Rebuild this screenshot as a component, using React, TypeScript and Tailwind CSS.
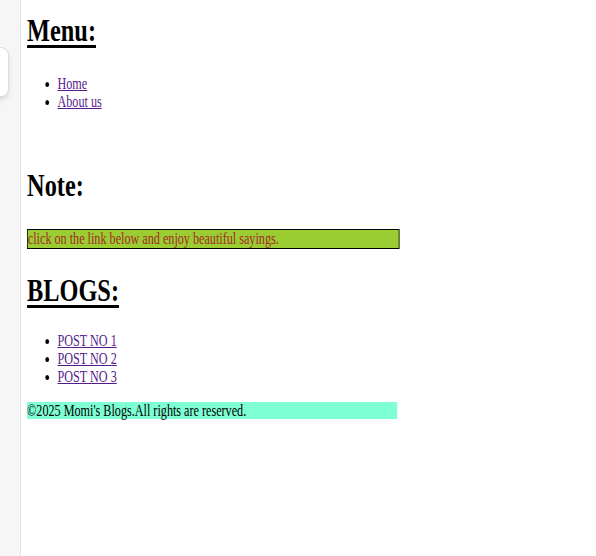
export default function App() {
  const menu = ["Home", "About us"];
  const posts = ["POST NO 1", "POST NO 2", "POST NO 3"];

  return (
    <div
      className="relative flex min-h-[556px] w-[596px] bg-white text-black"
      style={{ fontFamily: '"Liberation Serif", "Times New Roman", serif' }}
    >
      <div className="w-[21px] shrink-0 border-r border-[#e2e2e2] bg-[#f6f6f6]" />
      <div className="absolute left-[-12px] top-[47px] h-[50px] w-[21px] rounded-lg border border-[#dcdcdc] bg-white shadow-md" />

      <div className="w-[760px] shrink-0 origin-left scale-x-[0.76] pl-[8px]">
        <h1 className="mt-[13px] text-[32px] font-bold leading-[35px] underline decoration-[3px] underline-offset-[4px]">
          Menu:
        </h1>
        <ul className="mt-[27px] list-disc pl-[40px] text-[16px] leading-[18px]">
          {menu.map((m) => (
            <li key={m}>
              <a href="#" className="text-[#551a8b] underline">
                {m}
              </a>
            </li>
          ))}
        </ul>

        <h1 className="mt-[57px] text-[32px] font-bold leading-[35px]">Note:</h1>
        <p className="mt-[26px] w-[490px] border border-black bg-[#9acd32] text-[16px] leading-[18px] text-[#a52a2a]">
          click on the link below and enjoy beautiful sayings.
        </p>

        <h1 className="mt-[24px] text-[32px] font-bold leading-[35px] underline decoration-[3px] underline-offset-[4px]">
          BLOGS:
        </h1>
        <ul className="mt-[24px] list-disc pl-[40px] text-[16px] leading-[18px]">
          {posts.map((p) => (
            <li key={p}>
              <a href="#" className="text-[#551a8b] underline">
                {p}
              </a>
            </li>
          ))}
        </ul>

        <footer className="mt-[16px] w-[487px] bg-[#7fffd4] text-[16px] leading-[17px]">
          ©2025 Momi's Blogs.All rights are reserved.
        </footer>
      </div>
    </div>
  );
}
